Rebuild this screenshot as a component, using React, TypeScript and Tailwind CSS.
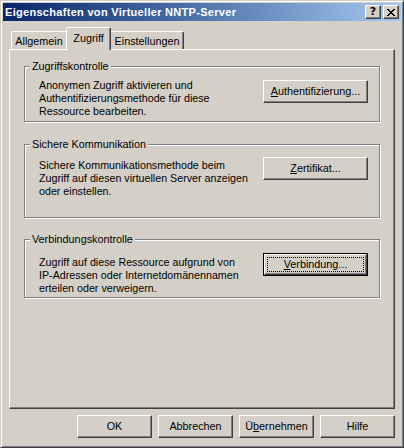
import React from 'react';

const font = "font-['Liberation_Sans',Arial,sans-serif]";
const raised =
  'border border-t-white border-l-white border-r-[#404040] border-b-[#404040] shadow-[inset_-1px_-1px_0_#808080]';

function Button({ className = '', children }: { className?: string; children: React.ReactNode }) {
  return (
    <div className={`h-[23px] ${raised} flex items-center justify-center text-[10.8px] leading-[13px] text-black ${className}`}>
      {children}
    </div>
  );
}

function DefaultButton({ className = '', children }: { className?: string; children: React.ReactNode }) {
  return (
    <div className={`h-[23px] border border-black ${className}`}>
      <div className={`relative h-full ${raised} flex items-center justify-center text-[10.8px] leading-[13px] text-black`}>
        <div className="absolute inset-[2px] border border-dotted border-black" />
        {children}
      </div>
    </div>
  );
}

function Group({
  title,
  className,
  textClass,
  buttonClass,
  lines,
  button,
}: {
  title: string;
  className: string;
  textClass: string;
  buttonClass: string;
  lines: string[];
  button: React.ReactNode;
}) {
  return (
    <div
      className={`relative ml-[14px] w-[356px] border border-[#808080] shadow-[1px_1px_0_#fff,inset_1px_1px_0_#fff] flex justify-between pl-[14px] pr-[11px] ${className}`}
    >
      <div className="absolute left-[5px] -top-[7px] bg-[#d4d0c8] px-[2px] text-[10.8px] leading-[13px]">{title}</div>
      <div className={`text-[10.7px] leading-[13px] ${textClass}`}>
        {lines.map((l) => (
          <div key={l}>{l}</div>
        ))}
      </div>
      <div className={buttonClass}>{button}</div>
    </div>
  );
}

export default function App() {
  return (
    <div
      className={`${font} w-[404px] h-[448px] bg-[#d4d0c8] border border-t-[#d4d0c8] border-l-[#d4d0c8] border-r-[#404040] border-b-[#404040] shadow-[inset_1px_1px_0_#fff,inset_-1px_-1px_0_#808080] p-[2px] flex flex-col text-black select-none`}
    >
      {/* title bar */}
      <div className="h-[18px] bg-linear-to-r from-[#0a246a] to-[#a6caf0] flex items-center pl-[2px] pr-[2px]">
        <div className="flex-1 text-white font-bold text-[11px] leading-[13px] tracking-[0.3px]">
          Eigenschaften von Virtueller NNTP-Server
        </div>
        <div className={`w-[16px] h-[14px] bg-[#d4d0c8] ${raised} flex items-center justify-center`}>
          <span className="text-[11px] leading-[10px] font-bold font-['DejaVu_Sans',sans-serif]">?</span>
        </div>
        <div className={`ml-[2px] w-[16px] h-[14px] bg-[#d4d0c8] ${raised} flex items-center justify-center`}>
          <svg width="8" height="7" viewBox="0 0 8 7" shapeRendering="crispEdges">
            <path
              d="M0 0h2v1h-2zM6 0h2v1h-2zM1 1h2v1h-2zM5 1h2v1h-2zM2 2h4v1h-4zM3 3h2v1h-2zM2 4h4v1h-4zM1 5h2v1h-2zM5 5h2v1h-2zM0 6h2v1h-2zM6 6h2v1h-2z"
              fill="#000"
            />
          </svg>
        </div>
      </div>

      {/* tabs */}
      <div className="mt-[6px] mx-[6px] h-[22px] flex items-end pl-[2px] text-[10.8px] leading-[13px]">
        <div className="w-[55px] h-[18px] border-l border-t border-white rounded-tl-[2px] flex items-center justify-center pt-[1px]">
          Allgemein
        </div>
        <div className="relative z-10 -mb-[1px] w-[45px] h-[23px] bg-[#d4d0c8] border-l border-t border-r border-t-white border-l-white border-r-[#404040] rounded-t-[2px] shadow-[inset_-1px_0_0_#808080] flex items-start justify-center pt-[4px]">
          Zugriff
        </div>
        <div className="w-[73px] h-[18px] border-t border-r border-t-white border-r-[#404040] rounded-tr-[2px] shadow-[inset_-1px_0_0_#808080] flex items-center justify-center pt-[1px]">
          Einstellungen
        </div>
      </div>

      {/* panel */}
      <div className={`mx-[6px] h-[360px] ${raised} flex flex-col`}>
        <Group
          title="Zugriffskontrolle"
          className="mt-[16px] h-[56px]"
          textClass="mt-[12px]"
          buttonClass="mt-[13px]"
          lines={['Anonymen Zugriff aktivieren und', 'Authentifizierungsmethode für diese', 'Ressource bearbeiten.']}
          button={
            <Button className="w-[105px]">
              <span>
                <u>A</u>uthentifizierung...
              </span>
            </Button>
          }
        />
        <Group
          title="Sichere Kommunikation"
          className="mt-[22px] h-[74px]"
          textClass="mt-[14px]"
          buttonClass="mt-[12px]"
          lines={[
            'Sichere Kommunikationsmethode beim',
            'Zugriff auf diesen virtuellen Server anzeigen',
            'oder einstellen.',
          ]}
          button={
            <Button className="w-[105px]">
              <span>
                <u>Z</u>ertifikat...
              </span>
            </Button>
          }
        />
        <Group
          title="Verbindungskontrolle"
          className="mt-[21px] h-[59px]"
          textClass="mt-[16px]"
          buttonClass="mt-[13px]"
          lines={[
            'Zugriff auf diese Ressource aufgrund von',
            'IP-Adressen oder Internetdomänennamen',
            'erteilen oder verweigern.',
          ]}
          button={
            <DefaultButton className="w-[105px]">
              <span>
                <u>V</u>erbindung...
              </span>
            </DefaultButton>
          }
        />
      </div>

      {/* bottom buttons */}
      <div className="mt-[6px] mx-[6px] flex justify-end gap-[6px]">
        <Button className="w-[75px]">OK</Button>
        <Button className="w-[75px]">Abbrechen</Button>
        <Button className="w-[75px]">
          <span>
            Ü<u>b</u>ernehmen
          </span>
        </Button>
        <Button className="w-[75px]">Hilfe</Button>
      </div>
    </div>
  );
}
